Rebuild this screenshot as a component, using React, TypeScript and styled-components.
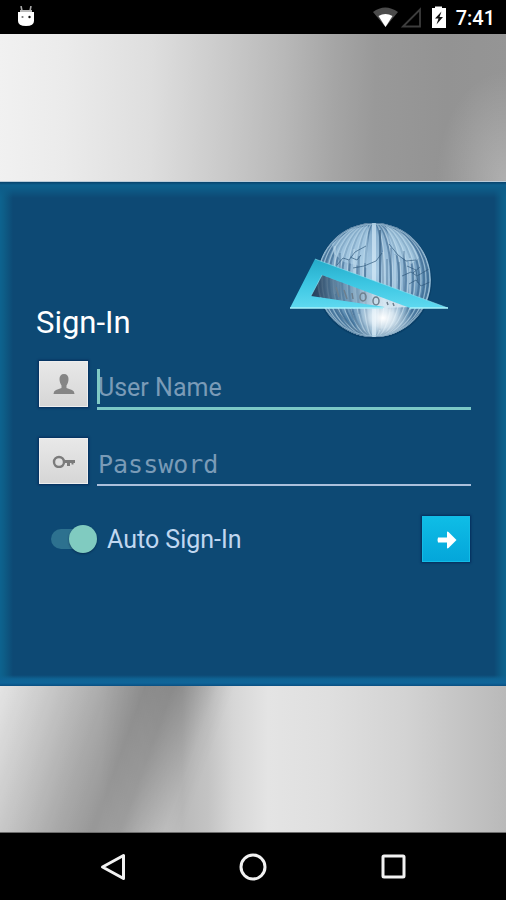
import React from "react";
import styled, { createGlobalStyle } from "styled-components";

const GlobalStyle = createGlobalStyle`
  *, *::before, *::after { box-sizing: border-box; }
  body {
    margin: 0;
    background: #000;
    font-family: Roboto, "Liberation Sans", sans-serif;
  }
`;

const Screen = styled.div`
  display: flex;
  flex-direction: column;
  min-height: 100vh;
`;

const StatusBar = styled.header`
  display: flex;
  align-items: center;
  justify-content: space-between;
  height: 34px;
  padding: 0 11px 0 17px;
  background: #000;
  color: #fff;

  svg { display: block; }
`;

const StatusGroup = styled.div`
  display: flex;
  align-items: center;
`;

const Clock = styled.time`
  margin-left: 9px;
  font-size: 20px;
  line-height: 24px;
  font-weight: 500;
  padding-top: 2px;
`;

const Main = styled.main`
  flex: 1;
  display: flex;
  flex-direction: column;
`;

const Steel = styled.div<{ $end?: boolean }>`
  flex: 1;
  min-height: 40px;
  border-bottom: 1px solid ${(p) => (p.$end ? "#6d6d6d" : "#b9cbd8")};
  background: ${(p) =>
    p.$end
      ? `linear-gradient(110deg, rgba(0,0,0,0) 0%, rgba(0,0,0,.13) 10%, rgba(0,0,0,.25) 19%, rgba(0,0,0,.33) 26%, rgba(0,0,0,.28) 31%, rgba(0,0,0,.16) 35%, rgba(0,0,0,.04) 39%, rgba(0,0,0,0) 42%),
         linear-gradient(90deg, #e4e4e4 0%, #e2e2e2 20%, #d2d2d2 28%, #bababa 36%, #c3c3c3 41%, #d6d6d6 46%, #e4e4e4 53%, #dfdfdf 65%, #d3d3d3 80%, #c6c6c6 90%, #b9b9b9 100%)`
      : `radial-gradient(ellipse 70px 110px at 100% 100%, rgba(255,255,255,.25), rgba(255,255,255,0)),
         linear-gradient(91deg, #f1f1f1 0%, #ebebeb 13%, #dedede 30%, #c9c9c9 45%, #b8b8b8 56%, #a5a5a5 66%, #999 74%, #939393 88%, #959595 100%)`};
`;

const Panel = styled.form`
  display: flex;
  flex-direction: column;
  padding: 40px 35px 124px 36px;
  background:
    linear-gradient(0deg, #094f82 0, #0f6599 3px, #0f6393 7px, rgba(14,98,142,0) 11px),
    linear-gradient(180deg, #07426b 0, #0d608e 3px, #0d5d89 6px, rgba(13,80,120,0) 16px),
    linear-gradient(90deg, #0d638f 0, #0d5d87 4px, rgba(13,93,135,0) 13px),
    linear-gradient(270deg, #0d638f 0, #0d5d87 4px, rgba(13,93,135,0) 12px),
    #0d4974;
`;

const Heading = styled.div`
  display: flex;
  align-items: flex-end;
  justify-content: space-between;
  margin-bottom: 21px;
  padding-right: 22px;
`;

const Title = styled.h1`
  margin: 0;
  color: #fff;
  font-size: 31px;
  line-height: 34px;
  font-weight: 400;
`;

const Field = styled.div`
  display: grid;
  grid-template-columns: 49px 1fr;
  gap: 9px;
  align-items: start;
  padding-left: 3px;
  margin-bottom: 28px;
`;

const FieldIcon = styled.label`
  display: grid;
  place-items: center;
  height: 46px;
  background: linear-gradient(#e8e8e8, #d6d6d6);
  border: 1px solid #eeeeee;
  box-shadow: 0 0 2px 1px rgba(2, 32, 82, 0.7);
`;

const InputBox = styled.div`
  position: relative;
`;

const TextInput = styled.input<{ $active?: boolean; $mono?: boolean }>`
  display: block;
  width: 100%;
  height: ${(p) => (p.$active ? 49 : 48)}px;
  padding: 8px 0 0 1px;
  border: 0;
  border-bottom: ${(p) => (p.$active ? "3px solid #7bc8c6" : "2px solid #abc0dc")};
  border-radius: 0;
  outline: 0;
  background: transparent;
  color: #dce8f5;
  caret-color: #80cbc4;
  font-family: ${(p) => (p.$mono ? '"DejaVu Sans Mono", monospace' : 'Roboto, "Liberation Sans", sans-serif')};
  font-size: 25px;
  line-height: 30px;

  &::placeholder {
    color: #7a9bb7;
    opacity: 1;
  }
`;

const Caret = styled.span`
  position: absolute;
  left: 0;
  top: 8px;
  width: 3px;
  height: 35px;
  background: #80cbc4;
`;

const Actions = styled.div`
  display: flex;
  align-items: center;
  justify-content: space-between;
  margin-top: 2px;
  padding: 0 1px 0 15px;
`;

const SwitchLabel = styled.label`
  display: flex;
  align-items: center;
  gap: 10px;
  color: #c0d7f0;
  font-size: 25px;
  line-height: 30px;
`;

const SwitchText = styled.span`
  padding-top: 3px;
`;

const Switch = styled.input`
  appearance: none;
  position: relative;
  width: 46px;
  height: 28px;
  margin: 0;

  &::before {
    content: "";
    position: absolute;
    inset: 4px 4px 4px 0;
    border-radius: 10px;
    background: #2d718f;
  }

  &::after {
    content: "";
    position: absolute;
    top: 0;
    left: 0;
    width: 28px;
    height: 28px;
    border-radius: 50%;
    background: #b0bec5;
    box-shadow: 0 1px 2px rgba(0, 20, 50, 0.5);
  }

  &:checked::after {
    left: auto;
    right: 0;
    background: #80cbc0;
  }
`;

const SubmitButton = styled.button`
  display: grid;
  place-items: center;
  width: 48px;
  height: 46px;
  padding: 3px 0 0 2px;
  border: 1px solid #12bce6;
  background: linear-gradient(#0fbde6, #04a6da);
  box-shadow: 0 0 2px 1px rgba(2, 32, 82, 0.7);
`;

const NavBar = styled.nav`
  display: grid;
  grid-template-columns: repeat(3, 1fr);
  height: 67px;
  padding: 0 43px;
  background: #000;
`;

const NavButton = styled.button`
  display: grid;
  place-items: center;
  padding: 0;
  border: 0;
  background: transparent;
`;

const meridians = [9, 17, 25, 32, 39, 45, 50, 54];
const bars = [46, 51, 60, 65, 70, 76, 94, 98, 102, 106, 110, 115, 121];

function GlobeLogo() {
  return (
    <svg width="160" height="118" viewBox="0 0 160 118" role="img" aria-label="Globe and set square">
      <defs>
        <radialGradient id="globe" cx="50%" cy="42%" r="58%">
          <stop offset="0" stopColor="#a9cce5" />
          <stop offset=".55" stopColor="#8cb2d0" />
          <stop offset=".85" stopColor="#4f82a9" />
          <stop offset="1" stopColor="#8db4cc" />
        </radialGradient>
        <radialGradient id="shine">
          <stop offset="0" stopColor="#fff" />
          <stop offset=".4" stopColor="#eef7fc" stopOpacity=".8" />
          <stop offset="1" stopColor="#d8ecf8" stopOpacity="0" />
        </radialGradient>
        <linearGradient id="square" x1="0" y1="0" x2="0" y2="1">
          <stop offset="0" stopColor="#24abc9" />
          <stop offset=".5" stopColor="#3cc6e2" />
          <stop offset="1" stopColor="#5fd9f0" />
        </linearGradient>
        <linearGradient id="shade">
          <stop offset="0" stopColor="#283c54" stopOpacity=".9" />
          <stop offset=".35" stopColor="#5d87a6" stopOpacity=".6" />
          <stop offset=".7" stopColor="#d8e8f2" stopOpacity=".85" />
        </linearGradient>
        <clipPath id="disc"><circle cx="85" cy="58" r="57" /></clipPath>
      </defs>
      <circle cx="85" cy="59" r="58" fill="#06365c" opacity=".5" />
      <circle cx="85" cy="58" r="57" fill="url(#globe)" />
      <g clipPath="url(#disc)">
        <g fill="none">
          {meridians.map((rx) => (
            <React.Fragment key={rx}>
              <ellipse cx="85" cy="58" rx={rx} ry="58" stroke="#38658c" strokeWidth="2" opacity=".55" />
              <ellipse cx="85" cy="58" rx={rx + 2} ry="58" stroke="#d9ebf5" strokeWidth="1.2" opacity=".45" />
            </React.Fragment>
          ))}
        </g>
        <path d="M43 22 62 7 79 4 78 46 55 40 45 32Z" fill="#b3d6ec" opacity=".5" />
        <path d="M97 4Q122 12 130 36L122 42Q116 36 105 32L101 18Z" fill="#c0e0f2" opacity=".5" />
        {bars.map((x, i) => (
          <path key={x} d={`M${x} ${24 + ((i * 7) % 18)}V${72 + ((i * 5) % 22)}`} stroke={i % 3 ? "#466f92" : "#cfe3ef"} strokeWidth="1" opacity=".75" />
        ))}
        <path d="M83 0H87V116H83Z" fill="#d3e8f6" opacity=".7" />
        <path d="M91 8V108" stroke="#3d6587" strokeWidth="1.5" />
        <g fill="none" stroke="#2c5578" strokeWidth="1" opacity=".65">
          <path d="M48 43 54 36 60 38 66 30 77 24M64 46 75 44 87 39 93 31M61 35 68 38 72 33M100 22 109 33 117 39 127 38" />
          <path d="M113 54 122 50 128 54 140 47M120 62 127 58 132 64 141 60M124 51 131 45M118 44 127 48 129 61" />
        </g>
        <path d="M32 81Q44 103 67 112M46 84Q55 102 74 113M61 87Q66 103 80 114M136 84Q122 105 98 113M118 88Q111 104 93 113" fill="none" stroke="#547b9b" strokeWidth="1.5" opacity=".8" />
        <ellipse cx="94" cy="96" rx="30" ry="24" fill="url(#shine)" />
      </g>
      <circle cx="85" cy="58" r="56" fill="none" stroke="#9fc4da" strokeWidth="1" opacity=".65" />
      <path d="M33 53 121 85 96 86 22 74Z" fill="url(#shade)" />
      <g fill="none" stroke="#6d7f8d" strokeWidth="1.5">
        <ellipse cx="74" cy="75" rx="3" ry="4" />
        <ellipse cx="87" cy="79" rx="3" ry="4" />
        <path d="M47 65 50 75M55 68 58 77M63 71 64 77M98 80 99 83M104 81 105 84" />
      </g>
      <path d="M26 37 159 86H121L33 53 22 74 96 85 91 86H1Z" fill="url(#square)" />
      <path d="M26 37 159 86M33 53 22 74" stroke="#92e6f5" strokeWidth=".8" opacity=".7" />
      <path d="M1 86H94M121 86H159" stroke="#a8f1fa" strokeWidth="1.4" />
    </svg>
  );
}

function AndroidIcon() {
  return (
    <svg width="18" height="22" viewBox="0 0 18 22" aria-hidden="true">
      <path d="M4 0 5 5M14 0 13 5" stroke="#aaa" strokeWidth="1.6" />
      <path d="M3 4H15V7H3Z" fill="#bbb" />
      <path d="M1 6H17V15Q17 20 9 20Q1 20 1 15Z" fill="#fff" />
      <circle cx="5.5" cy="11" r="1.1" fill="#777" />
      <circle cx="12.5" cy="11" r="1.2" fill="#111" />
    </svg>
  );
}

function StatusIcons() {
  return (
    <svg width="74" height="24" viewBox="374 5 74 24" aria-hidden="true">
      <path d="M374 12Q386 3 399 12L386.500 27Z" fill="#4b4b4b" />
      <path d="M379.500 16Q386.500 12 393.500 16L386.500 27Z" fill="#fff" />
      <path d="M404 26.500 421 9.500V26.500Z" fill="none" stroke="#3d3d3d" strokeWidth="1.800" />
      <path d="M436 8V6.500H443V8H447V28H433V8Z" fill="#fff" />
      <path d="M442.500 11.500 436 18.500H439.500L437.500 24.500 444 17H440.500Z" fill="#111" />
    </svg>
  );
}

export default function App() {
  return (
    <Screen>
      <GlobalStyle />
      <StatusBar>
        <AndroidIcon />
        <StatusGroup>
          <StatusIcons />
          <Clock>7:41</Clock>
        </StatusGroup>
      </StatusBar>
      <Main>
        <Steel />
        <Panel onSubmit={(e) => e.preventDefault()}>
          <Heading>
            <Title>Sign-In</Title>
            <GlobeLogo />
          </Heading>
          <Field>
            <FieldIcon htmlFor="user" aria-label="User Name">
              <svg width="24" height="22" viewBox="0 0 24 22" aria-hidden="true">
                <path d="M12 1C15 1 16.500 3 16.500 6C16.500 9 15.500 11 14.500 12.500V15L20 17Q22.500 18 22.500 21H1.500Q1.500 18 4 17L9.500 15V12.500C8.500 11 7.500 9 7.500 6C7.500 3 9 1 12 1Z" fill="#858585" />
              </svg>
            </FieldIcon>
            <InputBox>
              <TextInput id="user" type="text" placeholder="User Name" $active />
              <Caret />
            </InputBox>
          </Field>
          <Field>
            <FieldIcon htmlFor="pass" aria-label="Password">
              <svg width="24" height="14" viewBox="0 0 24 14" aria-hidden="true">
                <circle cx="7" cy="8" r="5" fill="none" stroke="#7b7b7b" strokeWidth="2.400" />
                <path d="M12 6H23V9H21.500V10.500H19.500V9H18V12H15V9H12Z" fill="#7b7b7b" />
              </svg>
            </FieldIcon>
            <TextInput id="pass" type="password" placeholder="Password" $mono />
          </Field>
          <Actions>
            <SwitchLabel>
              <Switch type="checkbox" role="switch" defaultChecked />
              <SwitchText>Auto Sign-In</SwitchText>
            </SwitchLabel>
            <SubmitButton type="submit" aria-label="Sign in">
              <svg width="20" height="18" viewBox="0 0 20 18" aria-hidden="true">
                <path d="M1 6.500H10V1.500Q10 0 11.500 1L19.500 9 11.500 17Q10 18 10 16.500V11.500H1Q0 9 1 6.500Z" fill="#fff" />
              </svg>
            </SubmitButton>
          </Actions>
        </Panel>
        <Steel $end />
      </Main>
      <NavBar>
        <NavButton type="button" aria-label="Back">
          <svg width="28" height="28" viewBox="0 0 28 28" aria-hidden="true">
            <path d="M24.500 2.500V25.500L3.500 14Z" fill="none" stroke="#f2f2f2" strokeWidth="3" strokeLinejoin="round" />
          </svg>
        </NavButton>
        <NavButton type="button" aria-label="Home">
          <svg width="28" height="28" viewBox="0 0 28 28" aria-hidden="true">
            <circle cx="14" cy="14" r="12" fill="none" stroke="#f2f2f2" strokeWidth="3" />
          </svg>
        </NavButton>
        <NavButton type="button" aria-label="Recent apps">
          <svg width="28" height="28" viewBox="0 0 28 28" aria-hidden="true">
            <rect x="4" y="3" width="21" height="21" rx="1" fill="none" stroke="#f2f2f2" strokeWidth="3" />
          </svg>
        </NavButton>
      </NavBar>
    </Screen>
  );
}
